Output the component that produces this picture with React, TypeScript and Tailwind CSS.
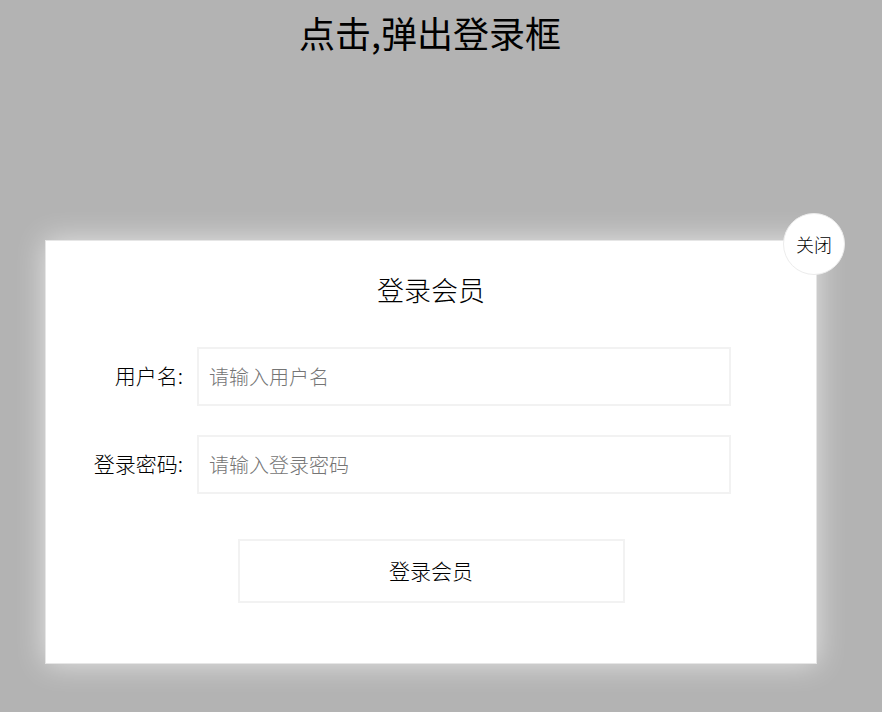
import { useState } from 'react'

export default function App() {
  const [open, setOpen] = useState(true)
  const font = { fontFamily: '"Noto Sans CJK SC", "Noto Sans", sans-serif' }

  return (
    <div className="min-h-screen w-full bg-[#b3b3b3] text-black font-light" style={font}>
      {/* trigger */}
      <h1
        className="cursor-pointer text-center text-[36px] font-normal leading-[64px] pr-[22px]"
        onClick={() => setOpen(true)}
      >
        点击,弹出登录框
      </h1>

      {open && (
        <div className="relative mx-auto mt-[176px] w-[772px] border border-[#e6e6e6] bg-white pb-[60px] pt-[31px] shadow-[0_0_28px_rgba(255,255,255,0.65)] -translate-x-[10px]">
          {/* close */}
          <button
            className="absolute -right-[29px] -top-[28px] flex h-[62px] w-[62px] items-center justify-center rounded-full border border-[#ececec] bg-white text-[18px] font-light"
            onClick={() => setOpen(false)}
          >
            关闭
          </button>

          <h2 className="text-center text-[27px] leading-[36px]">登录会员</h2>

          <div className="mt-[39px] flex flex-col gap-[29px]">
            <div className="flex items-center">
              <label className="w-[137px] pb-[4px] text-right text-[21px] leading-[28px]">用户名:</label>
              <input
                className="ml-[14px] h-[59px] w-[534px] border-2 border-[#f2f2f2] px-[10px] text-[20px] font-light outline-none placeholder:text-[#757575]"
                placeholder="请输入用户名"
              />
            </div>
            <div className="flex items-center">
              <label className="w-[137px] pb-[4px] text-right text-[21px] leading-[28px]">登录密码:</label>
              <input
                type="password"
                className="ml-[14px] h-[59px] w-[534px] border-2 border-[#f2f2f2] px-[10px] text-[20px] font-light outline-none placeholder:text-[#757575]"
                placeholder="请输入登录密码"
              />
            </div>
          </div>

          <div className="mt-[45px] flex justify-center">
            <button className="h-[64px] w-[387px] border-2 border-[#f2f2f2] bg-white text-[21px] font-light">
              登录会员
            </button>
          </div>
        </div>
      )}
    </div>
  )
}
